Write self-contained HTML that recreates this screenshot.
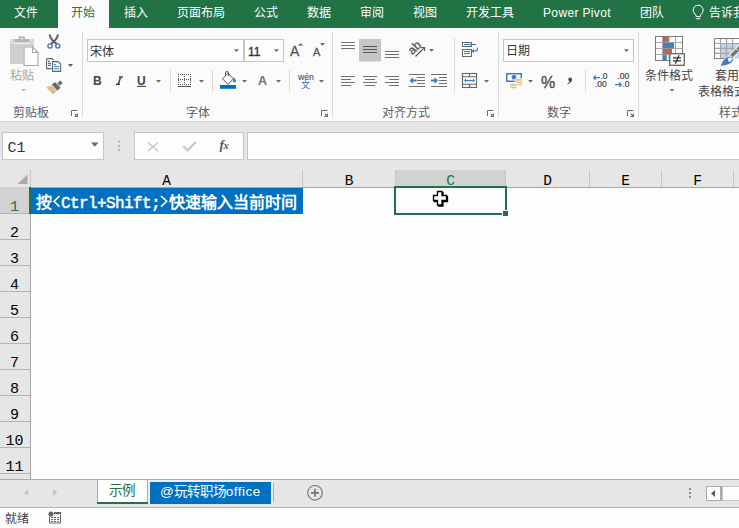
<!DOCTYPE html>
<html lang="zh-CN">
<head>
<meta charset="utf-8">
<style>
*{margin:0;padding:0;box-sizing:border-box}
html,body{width:739px;height:528px;overflow:hidden;background:#fdfdfd;font-family:"Liberation Sans",sans-serif;position:relative}
.a{position:absolute}
.t{position:absolute;white-space:nowrap}
.tab{position:absolute;top:0;height:27px;line-height:26px;font-size:12px;color:#fff;white-space:nowrap}
.sep{position:absolute;width:1px;background:#dadada}
.gl{position:absolute;top:105px;font-size:12px;color:#5e5e5e;white-space:nowrap;line-height:16px}
.box{position:absolute;background:#fdfdfd;border:1px solid #c6c6c6}
.ch{position:absolute;top:170px;height:17px;font-family:"Liberation Mono",monospace;font-size:14.5px;line-height:22.5px;color:#000;text-align:center}
.cd{position:absolute;top:170px;width:1px;height:17px;background:#c6c6c6}
.rh{position:absolute;left:0;width:30px;height:26px;font-family:"Liberation Mono",monospace;font-size:15px;line-height:42px;padding-right:1px;color:#000;text-align:center;background:#e6e6e6}
.lc{position:absolute;top:194.5px;width:9px;text-align:center;font-family:"Liberation Mono",monospace;font-weight:normal;-webkit-text-stroke:0.5px #fff;font-size:16px;line-height:18px;color:#fff;white-space:nowrap}
svg.ov{position:absolute;left:0;top:0;width:739px;height:528px;overflow:visible}
</style>
</head>
<body>
<!-- title tabs -->
<div class="a" style="left:0;top:0;width:739px;height:28px;background:#217346"></div>
<div class="a" style="left:58px;top:0;width:51px;height:28px;background:#fbfbfb"></div>
<div class="tab" style="left:14px">文件</div>
<div class="tab" style="left:71px;color:#217346">开始</div>
<div class="tab" style="left:124px">插入</div>
<div class="tab" style="left:177px">页面布局</div>
<div class="tab" style="left:254px">公式</div>
<div class="tab" style="left:307px">数据</div>
<div class="tab" style="left:360px">审阅</div>
<div class="tab" style="left:413px">视图</div>
<div class="tab" style="left:466px">开发工具</div>
<div class="tab" style="left:543px;letter-spacing:0.35px">Power Pivot</div>
<div class="tab" style="left:640px">团队</div>
<div class="tab" style="left:709px">告诉我</div>

<!-- ribbon -->
<div class="a" style="left:0;top:28px;width:739px;height:93px;background:#fbfbfb"></div>
<div class="a" style="left:0;top:121px;width:739px;height:1px;background:#d4d4d4"></div>
<div class="sep" style="left:82px;top:32px;height:85px"></div>
<div class="sep" style="left:332px;top:32px;height:85px"></div>
<div class="sep" style="left:498px;top:32px;height:85px"></div>
<div class="sep" style="left:638px;top:32px;height:85px"></div>
<div class="sep" style="left:170px;top:70px;height:22px"></div>
<div class="sep" style="left:212px;top:70px;height:22px"></div>
<div class="sep" style="left:289px;top:70px;height:22px"></div>
<div class="sep" style="left:454px;top:38px;height:55px"></div>
<div class="sep" style="left:585px;top:70px;height:22px"></div>
<div class="gl" style="left:13px">剪贴板</div>
<div class="gl" style="left:186px">字体</div>
<div class="gl" style="left:382px">对齐方式</div>
<div class="gl" style="left:547px">数字</div>
<div class="gl" style="left:719px">样式</div>
<div class="t" style="left:10px;top:68px;font-size:12px;line-height:16px;color:#a6a6a6">粘贴</div>
<div class="t" style="left:645px;top:68px;font-size:12px;line-height:16px;color:#444">条件格式</div>
<div class="t" style="left:715px;top:68px;font-size:12px;line-height:16px;color:#444">套用</div>
<div class="t" style="left:698px;top:83.5px;font-size:12px;line-height:16px;color:#444">表格格式</div>

<div class="box" style="left:87px;top:39px;width:157px;height:23px;border-color:#c6c6c6"></div>
<div class="box" style="left:244px;top:39px;width:40px;height:23px;border-color:#c6c6c6"></div>
<div class="t" style="left:90px;top:44px;font-size:12px;line-height:16px;color:#333">宋体</div>
<div class="t" style="left:248px;top:44px;font-size:12px;line-height:16px;color:#333;-webkit-text-stroke:0.35px #333">11</div>
<div class="box" style="left:503px;top:39px;width:131px;height:23px"></div>
<div class="t" style="left:506px;top:43px;font-size:12px;line-height:16px;color:#333">日期</div>

<div class="t" style="left:93px;top:74px;font-size:12px;font-weight:bold;line-height:14px;color:#444">B</div>

<div class="t" style="left:137px;top:74.3px;font-size:12px;font-weight:bold;line-height:14px;color:#444">U</div>
<div class="t" style="left:258px;top:73.5px;font-size:12.5px;font-weight:bold;line-height:14px;color:#727272">A</div>
<div class="t" style="left:290px;top:44px;font-size:14px;line-height:15px;color:#555;-webkit-text-stroke:0.3px #555">A</div>
<div class="t" style="left:313px;top:46.3px;font-size:11px;line-height:12px;color:#555;-webkit-text-stroke:0.3px #555">A</div>
<div class="t" style="left:298px;top:72px;font-size:8.7px;line-height:10px;color:#333">wén</div>
<div class="t" style="left:301px;top:80px;font-size:9px;line-height:11px;color:#2f6fbe">文</div>
<div class="t" style="left:541px;top:73.5px;font-size:16px;line-height:18px;color:#444;-webkit-text-stroke:0.3px #444">%</div>
<div class="t" style="left:600.5px;top:72.3px;font-size:8.5px;line-height:8px;color:#444;-webkit-text-stroke:0.2px #444">.0</div>
<div class="t" style="left:595px;top:79.6px;font-size:8.5px;line-height:8px;color:#444;-webkit-text-stroke:0.2px #444">.00</div>
<div class="t" style="left:617.5px;top:72.3px;font-size:8.5px;line-height:8px;color:#444;-webkit-text-stroke:0.2px #444">.00</div>
<div class="t" style="left:622.5px;top:79.6px;font-size:8.5px;line-height:8px;color:#444;-webkit-text-stroke:0.2px #444">.0</div>

<!-- formula bar area -->
<div class="a" style="left:0;top:122px;width:739px;height:65px;background:#e6e6e6"></div>
<div class="box" style="left:2px;top:132px;width:102px;height:28px"></div>
<div class="t" style="left:7.5px;top:140px;font-family:'Liberation Mono',monospace;font-size:15px;line-height:18px;color:#333">C1</div>
<div class="box" style="left:134px;top:132px;width:110px;height:28px"></div>
<div class="box" style="left:247px;top:132px;width:500px;height:28px"></div>

<!-- column headers -->
<div class="a" style="left:395px;top:170px;width:111px;height:17px;background:#d2d2d2"></div>
<div class="a" style="left:0;top:187px;width:739px;height:1px;background:#a6a6a6"></div>
<div class="cd" style="left:30px"></div>
<div class="cd" style="left:302px"></div>
<div class="cd" style="left:395px"></div>
<div class="cd" style="left:505px"></div>
<div class="cd" style="left:589px"></div>
<div class="cd" style="left:661px"></div>
<div class="cd" style="left:733px"></div>
<div class="ch" style="left:31px;width:271px">A</div>
<div class="ch" style="left:303px;width:92px">B</div>
<div class="ch" style="left:396px;width:109px;color:#217346">C</div>
<div class="ch" style="left:506px;width:83px">D</div>
<div class="ch" style="left:590px;width:71px">E</div>
<div class="ch" style="left:662px;width:71px">F</div>

<!-- row headers -->
<div class="a" style="left:0;top:187px;width:30px;height:292px;background:#e6e6e6"></div>
<div class="rh" style="top:187px;background:#d2d2d2;color:#217346">1</div>
<div class="rh" style="top:213px">2</div>
<div class="rh" style="top:239px">3</div>
<div class="rh" style="top:265px">4</div>
<div class="rh" style="top:291px">5</div>
<div class="rh" style="top:317px">6</div>
<div class="rh" style="top:343px">7</div>
<div class="rh" style="top:369px">8</div>
<div class="rh" style="top:395px">9</div>
<div class="rh" style="top:421px">10</div>
<div class="rh" style="top:447px">11</div>
<div class="rh" style="top:473px"></div>
<div class="a" style="left:0;top:213px;width:30px;height:1px;background:#b4b4b4"></div>
<div class="a" style="left:0;top:239px;width:30px;height:1px;background:#b4b4b4"></div>
<div class="a" style="left:0;top:265px;width:30px;height:1px;background:#b4b4b4"></div>
<div class="a" style="left:0;top:291px;width:30px;height:1px;background:#b4b4b4"></div>
<div class="a" style="left:0;top:317px;width:30px;height:1px;background:#b4b4b4"></div>
<div class="a" style="left:0;top:343px;width:30px;height:1px;background:#b4b4b4"></div>
<div class="a" style="left:0;top:369px;width:30px;height:1px;background:#b4b4b4"></div>
<div class="a" style="left:0;top:395px;width:30px;height:1px;background:#b4b4b4"></div>
<div class="a" style="left:0;top:421px;width:30px;height:1px;background:#b4b4b4"></div>
<div class="a" style="left:0;top:447px;width:30px;height:1px;background:#b4b4b4"></div>
<div class="a" style="left:0;top:473px;width:30px;height:1px;background:#b4b4b4"></div>
<div class="a" style="left:30px;top:187px;width:1px;height:292px;background:#a6a6a6"></div>
<div class="a" style="left:29px;top:187px;width:2px;height:27px;background:#217346"></div>
<!-- cell A1 -->
<div class="a" style="left:31px;top:188px;width:272px;height:26px;background:#0070c0"></div>
<div class="t" style="left:36px;top:194px;font-size:16px;font-weight:bold;line-height:18px;color:#fff">按</div>

<span class="lc" style="left:61px">C</span>
<span class="lc" style="left:70px">t</span>
<span class="lc" style="left:79px">r</span>
<span class="lc" style="left:88px">l</span>
<span class="lc" style="left:97px">+</span>
<span class="lc" style="left:106px">S</span>
<span class="lc" style="left:115px">h</span>
<span class="lc" style="left:124px">i</span>
<span class="lc" style="left:133px">f</span>
<span class="lc" style="left:142px">t</span>
<span class="lc" style="left:151px">;</span>

<div class="t" style="left:169px;top:194px;font-size:16px;font-weight:bold;line-height:18px;color:#fff">快速输入当前时间</div>
<!-- selection C1 -->
<div class="a" style="left:394px;top:186px;width:113px;height:29px;border:2px solid #217346"></div>
<div class="a" style="left:502px;top:210px;width:7px;height:7px;background:#fdfdfd"></div><div class="a" style="left:503px;top:211px;width:5px;height:5px;background:#217346"></div>

<!-- sheet tabs bar -->
<div class="a" style="left:0;top:479px;width:739px;height:29px;background:#e6e6e6;border-top:1px solid #ababab;border-bottom:1px solid #b6b6b6"></div>
<div class="a" style="left:97px;top:480px;width:51px;height:24px;background:#fdfdfd;border-left:1px solid #ababab;border-right:1px solid #ababab"></div>
<div class="a" style="left:97px;top:502px;width:51px;height:2px;background:#217346"></div>
<div class="t" style="left:109px;top:483px;font-size:13.5px;line-height:16px;color:#217346">示例</div>
<div class="a" style="left:148px;top:480px;width:125px;height:24px;background:#f0f0f0"></div>
<div class="a" style="left:150px;top:482px;width:121px;height:22px;background:#0070c0"></div>
<div class="t" style="left:160px;top:484px;font-size:13.5px;line-height:16px;color:#fff">@玩转职场<span style="letter-spacing:0.5px">office</span></div>
<div class="a" style="left:273px;top:483px;width:1px;height:19px;background:#ababab"></div>
<!-- scrollbar -->
<div class="a" style="left:706px;top:486px;width:15px;height:15px;background:#fdfdfd;border:1px solid #ababab"></div>
<div class="a" style="left:720px;top:486px;width:2px;height:15px;background:#ababab"></div>
<div class="a" style="left:722px;top:486px;width:30px;height:15px;background:#fdfdfd;border:1px solid #c6c6c6"></div>
<!-- status -->
<div class="t" style="left:5px;top:511px;font-size:12px;line-height:16px;color:#444">就绪</div>
<svg class="ov" viewBox="0 0 739 528">
<!-- tell me bulb -->
<g fill="none" stroke="#fff" stroke-width="1">
<path d="M696 16.5 v-1.5 q-2.8 -2 -2.8 -4.8 a5 5 0 0 1 10 0 q0 2.8 -2.8 4.8 v1.5 z"/>
<path d="M696.3 18.7 h4"/>
</g>
<!-- clipboard -->
<path d="M10 44 h24 v18.5 a1.5 1.5 0 0 1 -1.5 1.5 h-21 a1.5 1.5 0 0 1 -1.5 -1.5z" fill="#cfcfcf"/>
<rect x="10" y="39" width="24" height="5" fill="#dadada"/>
<rect x="14.5" y="39" width="15" height="3.6" fill="#b5b5b5"/>
<rect x="14" y="42.6" width="16" height="1" fill="#fbfbfb"/>
<rect x="18.6" y="36.2" width="6.4" height="3.5" rx="1.2" fill="#b5b5b5"/>
<rect x="21" y="37.6" width="2" height="1.6" fill="#f3f3f3"/>
<path d="M23.5 46.5 h9 l5.5 5.5 v14 h-14.5z" fill="#fdfdfd"/>
<path d="M24 47 h8.5 l5.5 5.5 v13 h-14z M32.5 47 v5.5 h5.5" fill="none" stroke="#a6a6a6" stroke-width="1.1"/>
<path d="M21 89 h5 l-2.5 2.5z" fill="#b8b8b8"/>
<!-- scissors -->
<g stroke="#5e5e5e" stroke-width="2" fill="none" stroke-linecap="round">
<path d="M49.8 35.2 Q50.8 39.5 56.3 43.6"/>
<path d="M57.8 35.2 Q56.8 39.5 51.3 43.6"/>
</g>
<g stroke="#4472c4" stroke-width="1.3" fill="none">
<circle cx="50" cy="46" r="2.1"/>
<circle cx="57.8" cy="46" r="2.1"/>
</g>
<!-- copy -->
<g fill="none" stroke="#666" stroke-width="1.1">
<path d="M46.6 58.6 h5.5 l1.5 1.5 M46.6 58.6 v10 h5.5"/>
<path d="M52.6 61.6 h5.5 l2.5 2.5 v7.3 h-8z"/>
</g>
<g stroke="#3b78c5" stroke-width="1.1">
<path d="M48 61.4 h2 M48 63.4 h3 M48 65.4 h3"/>
<path d="M54 64.5 h2 M54 66.5 h5 M54 68.7 h5"/>
</g>
<path d="M68 64 h5 l-2.5 3z" fill="#5b5b5b"/>
<!-- format painter -->
<path d="M46.1 87.3 L51.6 85.6 L56.9 90.7 L53.1 94.6z" fill="#d8c08c"/>
<path d="M52.1 84.4 L55.2 82.6 L60.3 87.7 L57.3 90.2z" fill="#666" stroke="#666" stroke-width="0.6" stroke-linejoin="round"/>
<path d="M57.8 83.3 L60.2 80.8 L62.3 82.9 L59.8 85.4z" fill="#666" stroke="#666" stroke-width="0.6" stroke-linejoin="round"/>
<!-- launchers -->
<path d="M71.5 116 v-5.5 h6" fill="none" stroke="#6a6a6a" stroke-width="1"/>
<path d="M78 113 v4 h-4z" fill="#6a6a6a"/><path d="M74.5 113.5 l2 2" stroke="#6a6a6a" stroke-width="1"/>
<path d="M321.5 116 v-5.5 h6" fill="none" stroke="#6a6a6a" stroke-width="1"/>
<path d="M328 113 v4 h-4z" fill="#6a6a6a"/><path d="M324.5 113.5 l2 2" stroke="#6a6a6a" stroke-width="1"/>
<path d="M487.5 116 v-5.5 h6" fill="none" stroke="#6a6a6a" stroke-width="1"/>
<path d="M494 113 v4 h-4z" fill="#6a6a6a"/><path d="M490.5 113.5 l2 2" stroke="#6a6a6a" stroke-width="1"/>
<path d="M627.5 116 v-5.5 h6" fill="none" stroke="#6a6a6a" stroke-width="1"/>
<path d="M634 113 v4 h-4z" fill="#6a6a6a"/><path d="M630.5 113.5 l2 2" stroke="#6a6a6a" stroke-width="1"/>
<!-- dropdown arrows -->
<g fill="#6b6b6b">
<path d="M234 49.3 h5 l-2.5 2.6z"/>
<path d="M274 49.3 h5 l-2.5 2.6z"/>
<path d="M156 80 h5 l-2.5 2.7z"/>
<path d="M199 80 h5 l-2.5 2.7z"/>
<path d="M242 80 h5 l-2.5 2.7z"/>
<path d="M276 80 h5 l-2.5 2.7z"/>
<path d="M319 80 h5 l-2.5 2.7z"/>
<path d="M429 49 h5 l-2.5 2.7z"/>
<path d="M484 80 h5 l-2.5 2.7z"/>
<path d="M624 49.3 h5 l-2.5 2.7z"/>
<path d="M528 80 h5 l-2.5 2.7z"/>
<path d="M669.5 89 h5 l-2.5 2.6z"/>
<path d="M91 142.6 h7.5 l-3.75 4.2z" fill="#6b6b6b"/>
</g>
<!-- grow/shrink triangles -->
<path d="M298 45.8 h5.2 l-2.6 -2.9z" fill="#3b78c5"/>
<path d="M320 43 h5 l-2.5 3.1z" fill="#3b78c5"/>
<!-- italic I -->
<path d="M120.7 77 L118.2 84.3 M118.9 77 h4 M116 84.3 h4" stroke="#444" stroke-width="1.5" fill="none"/>
<!-- U underline -->
<rect x="137" y="85.8" width="9" height="1.1" fill="#444"/>
<!-- border icon -->
<path d="M178 74h1v1h-1zM178 76h1v1h-1zM178 78h1v1h-1zM178 79h1v1h-1zM178 80h1v1h-1zM178 82h1v1h-1zM178 84h1v1h-1zM180 74h1v1h-1zM180 79h1v1h-1zM180 84h1v1h-1zM182 74h1v1h-1zM182 79h1v1h-1zM182 84h1v1h-1zM184 74h1v1h-1zM184 76h1v1h-1zM184 78h1v1h-1zM184 79h1v1h-1zM184 80h1v1h-1zM184 82h1v1h-1zM184 84h1v1h-1zM186 74h1v1h-1zM186 79h1v1h-1zM186 84h1v1h-1zM188 74h1v1h-1zM188 79h1v1h-1zM188 84h1v1h-1zM190 74h1v1h-1zM190 76h1v1h-1zM190 78h1v1h-1zM190 79h1v1h-1zM190 80h1v1h-1zM190 82h1v1h-1zM190 84h1v1h-1z" fill="#555"/>
<rect x="178" y="86" width="13" height="1" fill="#555"/>
<!-- fill bucket -->
<path d="M222.5 78.8 l5.5 -5.5 l5.5 5.5 l-5.5 5.5z" fill="#fdfdfd" stroke="#555" stroke-width="1"/>
<path d="M225.5 76 v-3 a1.5 1.5 0 0 1 3 0 v3" fill="none" stroke="#555" stroke-width="1"/>
<path d="M233.5 77 q2.5 2 2.5 4 a1.5 1.5 0 0 1 -3 0z" fill="#3b78c5"/>
<rect x="220" y="85" width="16" height="3.8" fill="#0070c0"/>
<!-- alignment top -->
<g stroke="#707070" stroke-width="1">
<path d="M341 42.5 h14 M341 45.5 h14 M341 48.5 h14"/>
<path d="M385 51.5 h14 M385 54.5 h14 M385 57.5 h14"/>
<path d="M341 76.5 h14 M341 79.5 h10 M341 82.5 h14 M341 85.5 h10"/>
<path d="M363 76.5 h14 M365 79.5 h10 M363 82.5 h14 M365 85.5 h10"/>
<path d="M385 76.5 h14 M389 79.5 h10 M385 82.5 h14 M389 85.5 h10"/>
<path d="M409 74.5 h16 M417 77.5 h8 M417 80.5 h8 M417 83.5 h8 M409 86.5 h16"/>
<path d="M431 74.5 h16 M439 77.5 h8 M439 80.5 h8 M439 83.5 h8 M431 86.5 h16"/>
</g>
<rect x="359" y="39" width="22" height="22.5" fill="#c6c6c6"/>
<path d="M363 46.5 h14 M363 49.5 h14 M363 52.5 h14" stroke="#555" stroke-width="1"/>
<!-- indent arrows -->
<path d="M409.5 80.5 l3.5 -3.3 v2.3 h3.5 v2 h-3.5 v2.3z" fill="#3b78c5"/>
<path d="M438 80.5 l-3.5 -3.3 v2.3 h-3.5 v2 h3.5 v2.3z" fill="#3b78c5"/>
<!-- orientation -->
<text x="0" y="0" font-family="Liberation Sans" font-size="12" fill="#4a4a4a" stroke="#4a4a4a" stroke-width="0.25" transform="translate(412.5 55.3) rotate(-45)">ab</text>
<path d="M415.5 56.5 L424 48" stroke="#555" stroke-width="1.1"/>
<path d="M421 47.5 h3.6 v3.6" fill="none" stroke="#555" stroke-width="1.1"/>
<!-- wrap text -->
<g fill="none" stroke="#666" stroke-width="1">
<rect x="462.5" y="42.5" width="9" height="4"/>
<rect x="462.5" y="49.5" width="9" height="7"/>
</g>
<g stroke="#3b78c5" stroke-width="1.1" fill="none">
<path d="M464 44.5 h12"/>
<path d="M464 51.5 h6 M464 53.5 h6"/>
<path d="M477.5 47.5 v1.5 a2 2 0 0 1 -2 2 h-3"/>
</g>
<path d="M471.5 51 l2.5 -2.3 v4.6z" fill="#3b78c5"/>
<!-- merge -->
<g fill="none" stroke="#666" stroke-width="1.1">
<rect x="462.5" y="73.5" width="14" height="14"/>
<path d="M462.5 76.7 h14 M462.5 84.2 h14 M469.5 73.5 v3.2 M469.5 84.2 v3.3"/>
</g>
<path d="M465.5 80.6 h8" stroke="#3b78c5" stroke-width="1.1"/>
<path d="M464 80.6 l2 -2 v4z M475 80.6 l-2 -2 v4z" fill="#3b78c5"/>
<!-- accounting -->
<rect x="506" y="73" width="16" height="9" fill="#3d7ac7"/>
<rect x="507.5" y="74.5" width="13" height="6" fill="#fdfdfd"/>
<circle cx="514" cy="77.3" r="2.4" fill="#3d7ac7"/>
<g fill="#d9c08c" stroke="#fdfdfd" stroke-width="0.8">
<rect x="514.6" y="78.6" width="7.8" height="2.8" rx="1.2"/>
<rect x="515.6" y="81.2" width="6.8" height="2.4" rx="1.1"/>
<rect x="516.6" y="83.4" width="5.8" height="2.4" rx="1.1"/>
<rect x="509.6" y="83.6" width="7.8" height="2.8" rx="1.2"/>
<rect x="510.1" y="86.2" width="6.8" height="2.6" rx="1.1"/>
</g>
<!-- comma -->
<path d="M569.8 77.4 a2.3 2.3 0 0 1 2.2 2.6 q-0.4 2.6 -4.2 4.2 l-0.4 -0.7 q1.8 -1 2.2 -2.1 a2.1 2.1 0 0 1 0.2 -4z" fill="#444"/>
<!-- decimal arrows -->
<path d="M593.5 77.6 h6.5 M593.5 77.6 l2.3 -2.2 M593.5 77.6 l2.3 2.2" stroke="#3b78c5" stroke-width="1.3" fill="none"/>
<path d="M621.5 84.7 h-6.5 M621.5 84.7 l-2.3 -2.2 M621.5 84.7 l-2.3 2.2" stroke="#3b78c5" stroke-width="1.3" fill="none"/>
<!-- conditional formatting -->
<rect x="655.5" y="36.5" width="27" height="24" fill="#fdfdfd" stroke="#7a7a7a" stroke-width="1"/>
<g stroke="#a8a8a8" stroke-width="1">
<path d="M662.5 37 v23 M669 37 v23 M675.5 37 v23 M656 42.5 h26 M656 48.5 h26 M656 54.5 h26"/>
</g>
<rect x="663" y="36.8" width="5.8" height="5.4" fill="#b86a45"/>
<rect x="663" y="42.8" width="11" height="5.4" fill="#3f7fc6"/>
<rect x="663" y="48.8" width="9" height="5.4" fill="#b86a45"/>
<rect x="663" y="54.8" width="3.8" height="5.4" fill="#3f7fc6"/>
<rect x="669.7" y="53.7" width="14.6" height="11.6" fill="#fdfdfd" stroke="#666" stroke-width="1.3"/>
<path d="M673 57.8 h8 M673 60.8 h8 M679 55.3 l-3.6 8.4" stroke="#333" stroke-width="1.3"/>
<!-- table format -->
<rect x="714.5" y="38.5" width="26" height="20" fill="#fdfdfd"/>
<rect x="720.5" y="43.5" width="20" height="15" fill="#bdd7ee"/>
<g stroke="#a4a4a4" stroke-width="1.2" fill="none">
<path d="M720.5 38.5 v20 M726.5 38.5 v20 M732.5 38.5 v20 M714.5 43.5 h26 M714.5 48.4 h26 M714.5 53.4 h26"/>
</g>
<path d="M714.5 38.5 h26 M714.5 38.5 v20 h12" stroke="#808080" stroke-width="1.1" fill="none"/>
<path d="M740.5 47 L731.5 56" stroke="#fbfbfb" stroke-width="6"/>
<path d="M740.5 47 L731.5 56" stroke="#777" stroke-width="3.8"/>
<path d="M738 50.5 l-2.4 -2.4" stroke="#fbfbfb" stroke-width="1"/>
<path d="M720 66.2 Q722 61 725.5 57.8 Q729.5 54.8 732.6 57.4 Q734.6 60.6 730.6 63.6 Q726 66.2 720 66.2z" fill="#3d7ac7" stroke="#fbfbfb" stroke-width="0.7"/>
<path d="M727.6 58.4 Q730.6 56.6 731.8 58.4 Q732.4 60.6 729 62.2z" fill="#fdfdfd"/>
<!-- name box dots -->
<g fill="#9a9a9a">
<rect x="118.3" y="140.8" width="1.6" height="1.6"/>
<rect x="118.3" y="145" width="1.6" height="1.6"/>
<rect x="118.3" y="149.2" width="1.6" height="1.6"/>
</g>
<!-- X check fx -->
<path d="M148 142.5 l10 8.5 M158 142.5 l-10 8.5" stroke="#c4c4c4" stroke-width="1.4"/>
<path d="M183.3 146.3 l4.2 4.2 l8.3 -8.6" stroke="#c8c8c8" stroke-width="2.2" fill="none"/>
<text x="219.5" y="149" font-family="Liberation Serif" font-style="italic" font-weight="bold" font-size="13.5" fill="#555">f<tspan font-size="10.5" dx="-0.5">x</tspan></text>
<!-- chevrons A1 -->
<path d="M59.5 196 L54 201.3 L59.5 206.6" stroke="#fff" stroke-width="1.6" fill="none"/>
<path d="M161 196 L166.8 201.3 L161 206.6" stroke="#fff" stroke-width="1.6" fill="none"/>
<!-- corner triangle -->
<path d="M27.5 174.5 v9.5 h-10z" fill="#aaaaaa"/>
<!-- cursor cross -->
<path d="M438.5 192.5 h4.5 v4 h4.5 v5 h-4.5 v4.5 h-4.5 v-4.5 h-4 v-5 h4z" fill="#000" stroke="#000" stroke-width="1.3"/>
<path d="M437.5 191.5 h4.5 v4 h4.5 v5 h-4.5 v4.5 h-4.5 v-4.5 h-4 v-5 h4z" fill="#fff" stroke="#000" stroke-width="1.3"/>
<!-- tab scroll arrows -->
<path d="M28.2 489 v7 l-4.2 -3.5z" fill="#c4c4c4"/>
<path d="M53 489 v7 l4.2 -3.5z" fill="#c4c4c4"/>
<!-- plus circle -->
<circle cx="315" cy="492.8" r="7.3" fill="none" stroke="#777" stroke-width="1.1"/>
<path d="M311 492.8 h8 M315 488.8 v8" stroke="#777" stroke-width="1.8"/>
<!-- dots right -->
<g fill="#8c8c8c">
<rect x="689" y="488" width="2" height="2"/>
<rect x="689" y="492" width="2" height="2"/>
<rect x="689" y="496" width="2" height="2"/>
</g>
<path d="M715 490 v7 l-4 -3.5z" fill="#5a5a5a"/>
<!-- status icon -->
<circle cx="51" cy="514" r="2.6" fill="#666"/>
<rect x="54" y="512" width="7" height="2.2" fill="#666"/>
<path d="M49.5 516.5 v6.5 h11 v-8.5" fill="none" stroke="#666" stroke-width="1"/>
<g fill="#666"><rect x="51" y="517" width="2" height="1"/><rect x="54" y="517" width="2" height="1"/><rect x="57" y="517" width="2" height="1"/><rect x="51" y="519" width="2" height="1"/><rect x="54" y="519" width="2" height="1"/><rect x="57" y="519" width="2" height="1"/><rect x="51" y="521" width="2" height="1"/><rect x="54" y="521" width="2" height="1"/><rect x="57" y="521" width="2" height="1"/></g>
</svg>
</body>
</html>
